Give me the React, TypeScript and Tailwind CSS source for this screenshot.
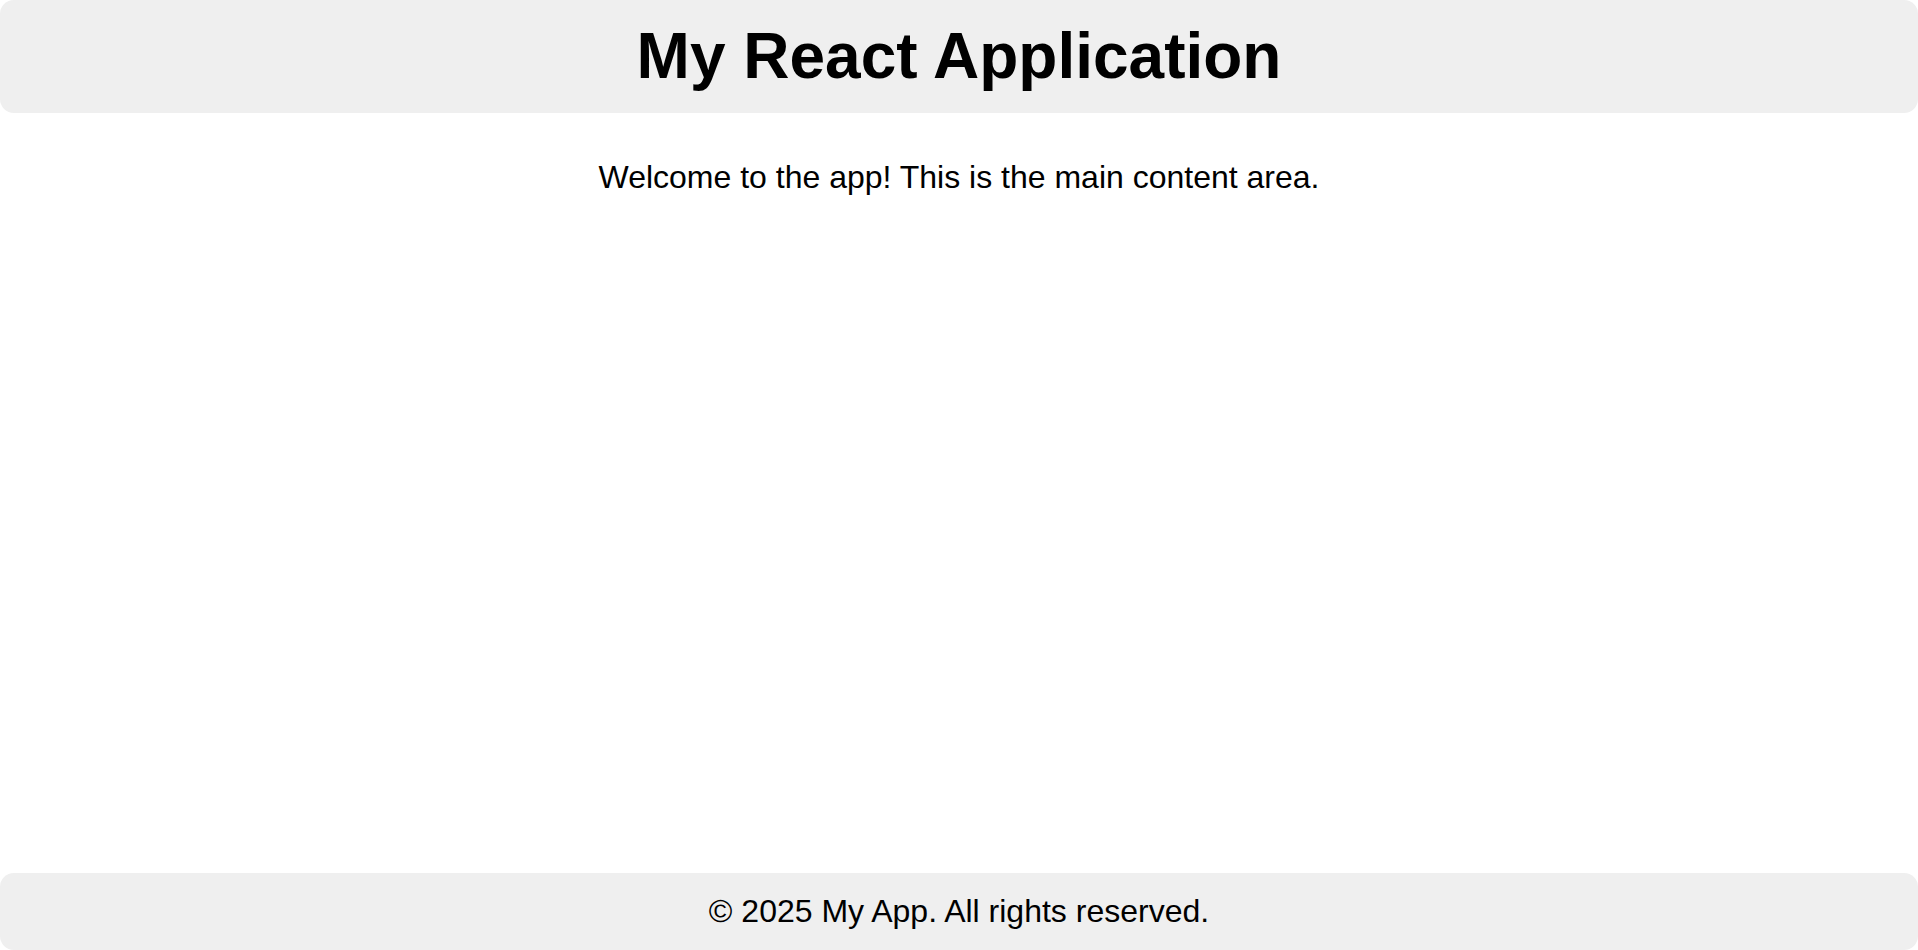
import React from "react";

export default function App() {
  return (
    <div
      className="min-h-screen flex flex-col bg-white text-black"
      style={{ fontFamily: '"Liberation Sans", Arial, sans-serif' }}
    >
      <header className="bg-[#efefef] rounded-[14px] pt-[20px] pb-[19px] text-center">
        <h1 className="text-[64px] font-bold leading-[1.15] m-0">My React Application</h1>
      </header>
      <main className="flex-1 pt-[46px] text-center">
        <p className="text-[32px] leading-[1.15]">Welcome to the app! This is the main content area.</p>
      </main>
      <footer className="bg-[#efefef] rounded-[14px] py-5 text-center">
        <p className="text-[32px] leading-[1.15]">© 2025 My App. All rights reserved.</p>
      </footer>
    </div>
  );
}
